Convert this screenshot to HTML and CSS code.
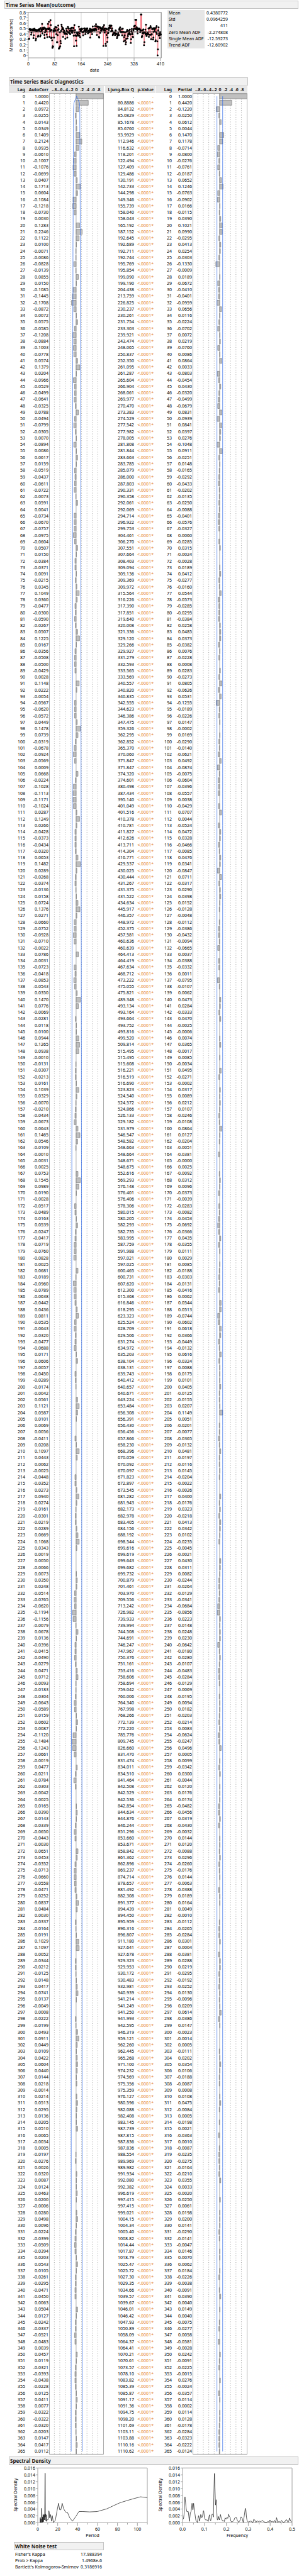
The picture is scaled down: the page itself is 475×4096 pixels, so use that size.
FILE: index.html
```html
<!DOCTYPE html>
<html lang="en">
<head>
<meta charset="utf-8">
<title>Time Series Mean(outcome)</title>
<link rel="stylesheet" href="styles.css">
</head>
<body>
<main class="report">
  <section>
    <h1 class="bar">Time Series Mean(outcome)</h1>
    <div class="summary">
      <svg class="series" id="series" viewBox="0 0 259 109" role="img" aria-label="Mean(outcome) by date"></svg>
      <table class="stats">
        <tr><th scope="row">Mean</th><td>0.4380772</td></tr>
        <tr><th scope="row">Std</th><td>0.0964259</td></tr>
        <tr><th scope="row">N</th><td>411</td></tr>
        <tr><th scope="row">Zero Mean ADF</th><td>-2.274808</td></tr>
        <tr><th scope="row">Single Mean ADF</th><td>-12.59273</td></tr>
        <tr><th scope="row">Trend ADF</th><td>-12.60902</td></tr>
      </table>
    </div>
  </section>

  <section class="nested diagnostics">
    <h2 class="bar">Time Series Basic Diagnostics</h2>
    <div class="lags">
      <table class="values">
        <colgroup><col class="lag-col"><col></colgroup>
        <thead><tr><th scope="col">Lag</th><th scope="col">AutoCorr</th></tr></thead>
        <tbody id="auto"></tbody>
      </table>
      <div class="plot">
        <div class="scale"><span>-.8</span><span>-.6</span><span>-.4</span><span>-.2</span><span>0</span><span>.2</span><span>.4</span><span>.6</span><span>.8</span></div>
        <div class="frame"><svg id="autoPlot" viewBox="0 0 144 6222" preserveAspectRatio="none"></svg></div>
      </div>
      <table class="values ljung">
        <colgroup><col class="q-col"><col></colgroup>
        <thead><tr><th scope="col">Ljung-Box Q</th><th scope="col">p-Value</th></tr></thead>
        <tbody id="ljung"></tbody>
      </table>
      <table class="values">
        <colgroup><col class="lag-col"><col></colgroup>
        <thead><tr><th scope="col">Lag</th><th scope="col">Partial</th></tr></thead>
        <tbody id="partial"></tbody>
      </table>
      <div class="plot">
        <div class="scale"><span>-.8</span><span>-.6</span><span>-.4</span><span>-.2</span><span>0</span><span>.2</span><span>.4</span><span>.6</span><span>.8</span></div>
        <div class="frame"><svg id="partialPlot" viewBox="0 0 144 6222" preserveAspectRatio="none"></svg></div>
      </div>
    </div>
  </section>

  <section class="nested spectral">
    <h2 class="bar">Spectral Density</h2>
    <div class="spectra">
      <svg id="period" viewBox="0 0 230 123" role="img" aria-label="Spectral density by period"></svg>
      <svg id="frequency" viewBox="0 0 230 123" role="img" aria-label="Spectral density by frequency"></svg>
    </div>
    <section class="noise">
      <h3 class="bar">White Noise test</h3>
      <table>
        <tr><th scope="row">Fisher's Kappa</th><td>17.988394</td></tr>
        <tr><th scope="row">Prob &gt; Kappa</th><td>1.4968e-6</td></tr>
        <tr><th scope="row">Bartlett's Kolmogorov-Smirnov</th><td>0.3186916</td></tr>
      </table>
    </section>
  </section>
</main>
<script src="report.js"></script>
</body>
</html>
```
FILE: styles.css
```css
body {
  margin: 0;
  background: #fff;
  color: #000;
  font-family: "Noto Sans", "Open Sans", sans-serif;
  font-size: 7px;
  line-height: 10px;
}

.report { padding: 1px 1px 8px 7px; }

.bar {
  box-sizing: border-box;
  height: 13px;
  margin: 0;
  padding-left: 1px;
  border: 1px solid #c4c4c4;
  background: #f1f1f1;
  color: #222;
  font-size: 8px;
  font-weight: 700;
  line-height: 11px;
  white-space: nowrap;
}

svg { display: block; width: 100%; overflow: visible; }
svg text { font-size: 7px; fill: #000; }

table { border-collapse: collapse; border-spacing: 0; }
th, td { padding: 0; font-weight: 400; white-space: nowrap; }

/* Series chart and its statistics */
.summary { display: flex; align-items: flex-start; }
.series { flex: 0 0 259px; width: 259px; }
.stats { width: 96px; margin-top: 2px; }
.stats th { width: 55px; padding: 0 2px; background: #e6e6e6; text-align: left; }
.stats td { text-align: right; }
.stats tr:nth-child(4n) th { height: 11px; }

.axis { fill: none; stroke: #a0a0a0; stroke-width: 1; }
.grid { fill: none; stroke: #d2d2d2; stroke-width: 1; }
.mean { fill: none; stroke: #222; stroke-width: 1; }
.line { fill: none; stroke: #ee3a4c; stroke-width: .6; }
.dots { fill: #000; }
.density { fill: none; stroke: #111; stroke-width: .7; stroke-linejoin: round; }

/* Correlation tables and bars */
.nested { padding-left: 7px; }
.diagnostics { width: 380px; }
.diagnostics .bar { margin-bottom: 1px; }
.lags { display: grid; grid-template-columns: 64fr 87fr 82fr 59fr 87fr; padding-right: 1px; }

.values { width: 100%; table-layout: fixed; text-align: right; }
.lag-col { width: 26px; }
.q-col { width: 46px; }
.values thead th {
  height: 11px;
  background: #e6e6e6;
  font-weight: 600;
  line-height: 11px;
}
.values td { height: 10px; vertical-align: bottom; }
.values tbody tr:nth-child(4n+1) td,
.values tbody tr:nth-child(120n+60) td { height: 11px; }
.values tr > :last-child { padding-right: 1px; }
.ljung { width: auto; margin: 0 0 0 2px; border-right: 1px solid #fff; }
.ljung tr > :last-child { padding-right: 2px; }
.ljung td:last-child { color: #e38430; }

.plot { display: flex; flex-direction: column; }
.scale {
  display: flex;
  height: 11px;
  padding: 0 4px;
  background: #e6e6e6;
  font-weight: 600;
  line-height: 11px;
}
.scale span { display: flex; flex: 1 1 0; min-width: 0; justify-content: center; white-space: nowrap; }
.frame { position: relative; flex: 1; }
.frame svg { position: absolute; inset: 0; height: 100%; }
.bars { fill: #c0c0c0; stroke: #808080; stroke-width: 1.2; }
.ticks { fill: none; stroke: #777; stroke-width: 1; stroke-dasharray: 2 4; }
.zero, .box { fill: none; stroke: #909090; stroke-width: 1.3; }
.limit { fill: none; stroke: #2d68e8; stroke-width: 1.2; }

/* Spectral density */
.spectral { padding-top: 3px; }
.spectra { display: grid; grid-template-columns: 1fr 1fr; }
.noise { width: 143px; padding-left: 8px; }
.noise table { width: 100%; margin-top: 2px; }
.noise th { padding-left: 2px; text-align: left; }
.noise td { padding-right: 3px; text-align: right; }
```
FILE: report.js
```js
// One line per lag: autocorrelation, Ljung-Box Q, partial autocorrelation.
const lags = `1.0000 . 1.0000
0.4420 80.8886 0.4420
0.0972 84.8132 -0.1220
-0.0255 85.0829 -0.0250
0.0143 85.1678 0.0612
0.0349 85.6760 0.0044
0.1409 93.9929 0.1470
0.2124 112.946 0.1178
0.0935 116.632 -0.0714
-0.0610 118.201 -0.0800
-0.1007 122.494 -0.0276
-0.1076 127.409 -0.0761
-0.0699 129.486 -0.0187
0.0407 130.191 0.0652
0.1713 142.733 0.1246
0.0604 144.298 -0.0763
-0.1084 149.346 -0.0902
-0.1218 155.739 0.0166
-0.0730 158.040 -0.0115
0.0030 158.043 0.0390
0.1283 165.192 0.1021
0.2246 187.152 0.0990
0.1122 192.645 -0.0295
0.0100 192.689 0.0413
-0.0071 192.711 0.0254
-0.0086 192.744 -0.0303
-0.0828 195.769 -0.1330
-0.0139 195.854 -0.0009
0.0855 199.090 0.0189
0.0150 199.190 -0.0672
-0.1085 204.438 -0.0410
-0.1445 213.759 -0.0401
-0.1708 226.825 -0.0959
-0.0872 230.237 0.0656
0.0072 230.261 0.0116
0.0575 231.754 -0.0224
-0.0585 233.303 -0.0702
-0.1208 239.921 0.0072
-0.0884 243.474 0.0219
-0.1003 248.065 -0.0760
-0.0778 250.837 0.0086
0.0574 252.350 0.0864
0.1379 261.095 0.0033
0.0204 261.287 -0.0803
-0.0966 265.604 -0.0454
-0.0529 266.904 0.0430
-0.0499 268.061 -0.0320
-0.0641 269.977 -0.0499
-0.0325 270.470 -0.0679
0.0788 273.383 0.0831
-0.0494 274.529 -0.0939
-0.0799 277.542 0.0841
-0.0305 277.982 0.0397
0.0070 278.005 0.0276
-0.0894 281.808 -0.1048
0.0086 281.844 0.0911
0.0617 283.663 -0.0251
0.0159 283.785 0.0148
-0.0519 285.079 -0.0165
-0.0437 286.000 -0.0292
-0.0611 287.803 -0.0433
-0.0722 290.331 -0.0202
-0.0073 290.358 -0.0135
0.0591 292.061 -0.0250
0.0041 292.069 -0.0088
-0.0734 294.714 -0.0401
-0.0670 296.922 -0.0576
-0.0757 299.753 -0.0327
-0.0975 304.461 0.0060
-0.0604 306.270 -0.0285
0.0507 307.551 0.0315
0.0150 307.664 -0.0024
-0.0384 308.403 -0.0028
-0.0371 309.094 0.0189
0.0091 309.136 0.0412
-0.0215 309.369 -0.0277
0.0345 309.972 -0.0160
0.1049 315.564 0.0544
0.0360 316.226 -0.0573
-0.0477 317.390 -0.0285
-0.0300 317.851 -0.0295
-0.0590 319.640 -0.0384
-0.0267 320.008 0.0258
0.0507 321.336 0.0485
0.1225 329.120 0.0373
0.0167 329.266 -0.0382
-0.0356 329.927 0.0076
-0.0508 331.279 -0.0228
-0.0500 332.593 0.0008
-0.0429 333.565 0.0283
0.0028 333.569 -0.0273
0.1148 340.557 0.0805
0.0222 340.820 -0.0626
-0.0054 340.835 0.0531
-0.0567 342.555 -0.1255
-0.0620 344.623 -0.0189
-0.0572 346.386 -0.0226
0.0449 347.475 0.0147
0.1478 359.326 -0.0002
0.0739 362.295 0.0169
-0.0319 362.852 -0.0290
-0.0678 365.370 -0.0140
-0.0924 370.060 -0.0621
-0.0569 371.847 0.0492
0.0009 371.847 -0.0874
0.0668 374.320 -0.0075
-0.0224 374.601 -0.0604
-0.1028 380.498 -0.0396
-0.1113 387.434 -0.0557
-0.1171 395.140 0.0038
-0.1024 401.049 -0.0429
0.0287 401.516 0.0707
0.1249 410.378 0.0044
0.0266 410.781 -0.0524
-0.0428 411.827 0.0472
-0.0373 412.626 0.0328
-0.0434 413.711 -0.0466
-0.0320 414.304 -0.0085
0.0653 416.771 0.0476
0.1482 429.537 0.0341
0.0289 430.025 -0.0847
-0.0268 430.444 0.0711
-0.0374 431.267 -0.0317
-0.0136 431.375 0.0290
0.0158 431.522 0.0398
0.0724 434.634 0.0152
0.1376 445.917 -0.0128
0.0271 446.357 -0.0048
-0.0660 448.972 -0.0112
-0.0752 452.375 -0.0386
-0.0928 457.581 -0.0432
-0.0710 460.636 -0.0094
-0.0022 460.639 -0.0665
0.0786 464.413 0.0037
-0.0031 464.419 -0.0388
-0.0723 467.634 -0.0332
-0.0418 468.712 0.0011
-0.0853 473.222 -0.0795
-0.0543 475.055 -0.0107
0.0350 475.821 0.0062
0.1470 489.348 0.0473
0.0776 493.134 0.0284
-0.0069 493.164 -0.0333
-0.0281 493.664 0.0470
0.0118 493.752 -0.0025
0.0100 493.816 -0.0006
0.0944 499.520 0.0074
0.1265 509.814 0.0365
0.0938 515.495 -0.0017
-0.0010 515.495 0.0085
-0.0131 515.608 -0.0034
-0.0307 516.221 0.0495
-0.0213 516.519 -0.0271
0.0161 516.690 -0.0002
0.1039 523.823 0.0317
0.0329 524.540 0.0089
-0.0070 524.572 0.0212
-0.0210 524.866 0.0107
-0.0434 526.133 -0.0246
-0.0673 529.182 -0.0108
0.0643 531.979 0.0864
0.1465 546.547 0.0127
0.0546 548.582 -0.0204
-0.0109 548.663 -0.0051
-0.0010 548.664 -0.0381
-0.0031 548.671 -0.0000
0.0025 548.675 0.0025
0.0753 552.616 -0.0092
0.1545 569.293 0.0312
0.0989 576.148 0.0096
0.0190 576.401 -0.0373
-0.0028 576.406 -0.0039
-0.0517 578.306 -0.0283
-0.0489 580.015 -0.0082
0.0163 580.205 -0.0453
0.0539 582.293 -0.0692
-0.0247 582.735 -0.0366
-0.0417 583.995 0.0435
-0.0719 587.759 -0.0355
-0.0760 591.988 0.0111
-0.0828 597.021 0.0029
0.0025 597.025 0.0085
0.0681 600.465 -0.0188
-0.0189 600.731 -0.0303
-0.0960 607.620 -0.0131
-0.0789 612.300 -0.0416
-0.0638 615.368 0.0062
-0.0442 616.846 0.0544
0.0436 618.295 0.0513
0.0811 623.323 -0.0744
-0.0535 625.524 -0.0602
-0.0643 628.709 0.0618
-0.0320 629.506 0.0366
-0.0477 631.274 -0.0449
-0.0688 634.972 -0.0132
0.0171 635.203 0.0616
0.0606 638.104 -0.0324
-0.0057 638.131 0.0088
-0.0450 639.743 0.0175
-0.0289 640.412 0.0101
-0.0174 640.657 0.0405
-0.0042 640.671 -0.0125
0.0561 643.224 -0.0155
0.1121 653.484 0.0207
0.0587 656.308 0.1149
0.0101 656.391 0.0051
0.0069 656.430 -0.0201
0.0056 656.456 -0.0077
-0.0411 657.866 -0.0365
0.0208 658.230 -0.0132
0.1097 668.396 0.0481
0.0443 670.059 -0.0197
0.0062 670.092 -0.0116
-0.0025 670.097 0.0145
-0.0448 671.823 -0.0204
-0.0352 672.897 -0.0022
0.0273 673.545 -0.0026
0.0940 681.282 0.0400
0.0274 681.943 -0.0176
-0.0161 682.173 0.0323
-0.0301 682.978 -0.0218
-0.0219 683.405 0.0413
0.0289 684.156 0.0342
0.0669 688.192 0.0102
0.1068 698.544 -0.0235
0.0343 699.616 -0.0045
0.0019 699.619 -0.0021
0.0050 699.643 0.0430
-0.0066 699.682 0.0311
0.0073 699.732 0.0082
0.0350 700.879 -0.0244
0.0248 701.461 -0.0264
-0.0514 703.970 -0.0129
-0.0765 709.556 -0.0341
-0.0620 713.242 -0.0684
-0.1194 726.982 -0.0856
-0.1156 739.933 0.0223
-0.0079 739.994 0.0148
0.0678 744.508 0.0248
0.0136 744.691 0.0230
-0.0396 746.247 -0.0642
-0.0415 747.967 -0.0180
-0.0490 750.376 0.0280
-0.0279 751.161 -0.0107
0.0471 753.416 -0.0483
0.0712 758.606 -0.0284
-0.0093 758.694 -0.0129
-0.0183 759.042 0.0069
-0.0304 760.006 -0.0195
-0.0643 764.340 0.0094
-0.0589 767.998 0.0182
0.0159 768.266 -0.0203
0.0602 772.139 -0.0214
0.0087 772.220 0.0083
-0.1120 785.776 -0.0624
-0.1484 809.745 -0.0247
-0.1243 826.660 0.0496
-0.0661 831.470 0.0005
-0.0019 831.474 0.0099
0.0477 834.011 -0.0342
-0.0211 834.510 0.0300
-0.0784 841.464 -0.0044
-0.0303 842.508 0.0120
-0.0042 842.529 0.0176
0.0025 842.536 0.0174
0.0165 842.854 -0.0482
0.0390 844.634 -0.0456
0.0143 844.876 0.0319
-0.0339 846.244 -0.0430
-0.0650 851.296 -0.0032
-0.0443 853.660 0.0144
-0.0030 853.671 0.0120
0.0651 858.842 -0.0088
0.0453 861.362 0.0296
-0.0352 862.896 -0.0260
-0.0713 869.237 -0.0176
-0.0660 874.714 0.0144
-0.0558 878.657 -0.0063
-0.0471 881.492 -0.0388
0.0252 882.308 0.0189
0.0837 891.377 0.0164
0.0484 894.439 0.0049
0.0030 894.450 -0.0010
-0.0337 895.959 -0.0112
-0.0164 896.316 -0.0265
0.0191 896.807 -0.0284
0.1029 911.180 0.0301
0.1097 927.641 0.0004
0.0052 927.678 -0.0381
-0.0344 929.323 0.0288
-0.0212 929.953 0.0219
-0.0125 930.172 -0.0295
0.0148 930.483 -0.0192
0.0417 932.981 -0.0252
0.0741 940.939 0.0130
0.0137 941.214 -0.0096
-0.0049 941.249 0.0209
0.0008 941.250 0.0614
-0.0222 941.993 -0.0386
-0.0199 942.595 0.0147
0.0493 946.319 -0.0023
0.0911 959.121 -0.0014
0.0449 962.260 0.0005
0.0109 962.445 -0.0111
0.0422 965.268 0.0202
0.0604 971.100 0.0354
0.0440 974.232 0.0106
0.0144 974.569 -0.0188
0.0218 975.356 -0.0087
-0.0014 975.359 0.0008
0.0214 976.127 0.0108
0.0513 980.596 0.0475
0.0295 982.088 -0.0084
0.0136 982.408 0.0005
0.0205 983.145 -0.0198
0.0510 987.739 0.0021
0.0065 987.815 -0.0363
-0.0034 987.836 0.0010
0.0005 987.836 -0.0087
-0.0197 988.554 -0.0235
-0.0276 989.969 -0.0275
0.0026 989.982 -0.0164
0.0320 991.934 -0.0210
0.0087 992.080 0.0355
0.0124 992.382 0.0033
0.0463 996.619 -0.0020
0.0200 997.415 0.0250
-0.0006 997.415 0.0061
0.0280 999.021 0.0198
0.0498 1004.15 0.0200
0.0096 1004.34 0.0141
-0.0224 1005.40 -0.0290
-0.0399 1008.82 -0.0141
-0.0509 1014.44 -0.0047
-0.0394 1017.87 0.0146
0.0203 1018.79 0.0070
0.0543 1025.47 0.0062
0.0105 1025.72 0.0184
-0.0261 1027.30 -0.0226
-0.0295 1029.35 -0.0038
-0.0471 1034.66 -0.0091
-0.0450 1039.57 0.0390
0.0063 1039.67 0.0040
0.0504 1046.01 0.0149
0.0127 1046.42 0.0040
-0.0242 1047.93 -0.0075
-0.0337 1050.89 -0.0277
-0.0521 1058.09 0.0058
-0.0483 1064.37 -0.0581
0.0039 1064.41 -0.0028
0.0457 1070.21 0.0242
0.0119 1070.61 -0.0091
-0.0321 1073.57 -0.0225
-0.0393 1078.10 -0.0015
-0.0438 1083.82 0.0276
-0.0228 1085.39 -0.0024
0.0125 1085.87 -0.0357
0.0411 1091.17 0.0114
0.0077 1091.36 0.0002
-0.0322 1094.75 0.0114
-0.0322 1098.20 0.0128
-0.0320 1101.69 -0.0178
-0.0203 1103.11 -0.0284
0.0147 1103.88 -0.0323
0.0417 1110.16 -0.0222
0.0112 1110.62 -0.0124`.split("\n").map(line => line.split(" "));

const byId = id => document.getElementById(id);

function fillRows(id, rows) {
  byId(id).innerHTML = rows
    .map(cells => "<tr>" + cells.map(c => "<td>" + c + "</td>").join("") + "</tr>")
    .join("");
}
fillRows("auto", lags.map((r, i) => [i, r[0]]));
fillRows("ljung", lags.map((r, i) => [r[1], i ? "&lt;.0001*" : "."]));
fillRows("partial", lags.map((r, i) => [i, r[2]]));

// Horizontal bar per lag, dotted ticks and the two confidence limits.
function drawCorrelation(id, values, limits, centre) {
  const zero = 71, unit = 71.5, pitch = 17, height = 6222;
  let ticks = "", bars = "";
  for (let k = -4; k <= 4; k++) {
    if (k) ticks += `M${zero + k * 14.3} 3V${height}`;
  }
  values.forEach((v, i) => {
    const w = Math.round(Math.abs(v) * unit);
    if (w) bars += `M${zero} ${i * pitch + 2}h${v < 0 ? -w : w}v13H${zero}z`;
  });
  const side = sign => "M" + limits.map((l, i) => `${centre + sign * l} ${i * pitch + 8.5}`).join("L");
  byId(id).innerHTML =
    `<path class="ticks" d="${ticks}"/><path class="bars" d="${bars}"/>` +
    `<path class="zero" d="M${zero} 0V${height}"/>` +
    `<path class="box" d="M.8 .8H143.2V${height - 1}H.8z"/>` +
    `<path class="limit" d="${side(-1)}"/><path class="limit" d="${side(1)}"/>`;
}

const auto = lags.map(r => +r[0]);
const partial = lags.map(r => +r[2]);
let sum = 0;
const autoLimits = auto.map((r, i) => {
  if (i === 0) return 0;
  const half = 143 * Math.sqrt((1 + 2 * sum) / 411);
  sum += r * r;
  return half;
});
drawCorrelation("autoPlot", auto, autoLimits, 72.5);
drawCorrelation("partialPlot", partial, partial.map(() => 7.5), 71.5);

const label = (x, y, text, anchor = "middle") =>
  `<text x="${x}" y="${y}" text-anchor="${anchor}">${text}</text>`;
const turned = (x, y, text) =>
  `<text transform="translate(${x} ${y}) rotate(-90)" text-anchor="middle">${text}</text>`;

// Series chart. Extremes are listed; other days lie inside a local band.
const extremes = [199,218,201,216,216,183,218,168,234,210,237,189,252,228,255,216,270,200,271,192,288,198,289,188,303,99,306,174,321,186,324,210,326,165,339,183,342,204,348,99,357,81,360,201,369,69,372,108,375,210,378,207,381,228,384,288,387,276,390,279,393,159,396,207,408,123,415,180,420,243,423,243,423,187,429,111,435,294,438,288,441,285,441,165,444,276,447,234,450,252,456,105,468,201,480,177,486,216,489,177,498,180,501,207,507,121,522,174,525,180,540,170,552,192,555,276,558,108,570,231,573,195,576,273,579,175,590,192,594,120,603,204,627,189,645,180,663,174,681,207,697,180,728,102,735,186,750,201,753,207,762,170,786,273,792,108,804,255,807,273,813,186,816,240,820,207,822,172,846,111,849,114,878,187,882,150,894,210,897,201,900,187,918,126,933,189,948,237,948,204,954,189,957,228,963,261,966,243,966,216,978,213,981,195,999,183,1002,249,1005,219,1017,201,1020,204,1038,66,1047,66,1056,174,1083,24,1086,24,1089,204,1092,195,1107,267,1110,243,1122,105,1128,195,1137,183,1146,201,1158,117,1164,219,1170,138,1178,222,1182,207,1197,237,1200,228,1206,117,1212,237,1215,348,1218,300,1221,126,1233,210,1239,183];
const bands = [[250,136,152],[290,134,158],[330,120,160],[370,125,158],[395,133,160],[420,122,155],[460,118,165],[510,130,178],[560,128,172],[600,145,196],[660,128,165],[700,135,172],[740,116,150],[790,120,152],[830,130,170],[860,112,160],[910,155,188],[950,132,168],[1020,138,185],[1070,112,150],[1120,140,178],[1180,122,188],[1250,122,192]];
const series = new Array(411);
for (let i = 0; i < extremes.length; i += 2) {
  let day = Math.round((extremes[i] - 193) / 2.547);
  while (series[day] !== undefined && day < 410) day++;
  series[day] = extremes[i + 1];
}
let seed = 7;
for (let day = 2; day < 411; day++) {
  seed = (seed * 16807) % 2147483647;
  if (series[day] !== undefined) continue;
  const band = bands.find(b => b[0] > 193 + day * 2.547);
  series[day] = band[1] + (band[2] - band[1]) * (seed / 2147483647);
}
const points = [];
series.forEach((y, day) => {
  points.push([((193 + day * 2.547) * .2012 - .96).toFixed(1), (y * .2012 + 4.1).toFixed(1)]);
});
let chart = "";
[82, 164, 246, 328, 410].forEach(v => {
  chart += `<path class="grid" d="M${37.9 + v * .5125} 6V78"/>`;
});
let ticks = "M37.9 5.5H249.4V78H37.9z";
for (let i = 0; i <= 5; i++) {
  const x = 37.9 + i * 42.03;
  ticks += `M${x} 78v5`;
  chart += label(x, 90, i * 82);
}
for (let i = 0; i <= 8; i++) {
  const y = 74.1 - i * 8.56;
  ticks += `M37.9 ${y}h-3.5` + (i < 8 ? `M37.9 ${y - 4.3}h-2` : "");
  chart += label(34, y + 3, i ? "0." + i : "0", "end");
}
chart += `<path class="axis" d="${ticks}"/><path class="line" d="M${points.join("L")}"/>` +
  `<g class="dots">${points.map(p => `<circle cx="${p[0]}" cy="${p[1]}" r="1.5"/>`).join("")}</g>` +
  `<path class="mean" d="M37.9 36.8H249.4"/>` +
  label(143, 100, "date") + turned(13, 42, "Mean(outcome)");
byId("series").innerHTML = chart;

// Spectral charts share one frame: x 46-220, y 5-92.
const frequencyLine = [957,772,960,768,963,735,966,620,968,595,971,640,974,690,978,713,985,711,988,750,991,789,993,765,996,720,999,713,1002,690,1005,646,1008,697,1010,697,1013,646,1016,690,1020,730,1025,780,1028,785,1033,797,1036,765,1039,743,1044,787,1047,765,1050,735,1053,740,1056,761,1060,745,1064,706,1066,705,1070,760,1075,777,1085,778,1090,789,1094,750,1097,737,1100,778,1103,783,1107,745,1110,730,1113,733,1117,755,1119,600,1122,410,1125,520,1128,660,1131,618,1134,690,1137,775,1139,778,1143,750,1148,778,1151,755,1154,735,1158,765,1165,785,1170,783,1174,790,1178,762,1184,770,1188,757,1192,765,1197,732,1200,750,1204,755,1208,785,1212,794,1218,790,1224,782,1229,762,1237,758,1242,780,1249,796,1255,785,1262,753,1268,765,1273,797,1279,740,1284,686,1287,697,1290,755,1294,786,1301,794,1309,788,1315,786,1320,797,1324,797,1329,771,1334,780,1340,797,1346,784,1352,791,1358,787,1366,791,1374,780,1380,791,1388,796,1397,797,1403,789,1409,796,1413,778,1419,794,1425,788,1432,794,1438,781,1443,797,1448,759,1454,797,1461,789,1468,796,1474,781,1482,797,1491,793,1499,774,1502,778,1508,797,1512,785,1516,763,1521,783,1527,795];
const periodLine = [772,601,736,595,683,617,630,641,595,665,560,690,510,711,470,714,435,711,414,711,398,750,380,787,366,762,354,719,344,715,334,690,326,646,319,697,313,697,307,646,298,713,290,780,280,797,274,743,270,787,265,735,260,761,258,715,256,705,252,775,247,777,244,789,243,737,241,783,239,730,238,755,237,408,236,408,235,640,234,778,232,735,231,778,230,740,229,785,228,792,226,732,225,755,224,795,223,755,222,795,220,760,219,686,218,686,217,797,216,770,215,797,214,770,213,797,212,759,211,759,210,797];
function drawSpectrum(id, line, left, xLabels, step, title) {
  let path = "M46 5.2H220V92.2H46z", text = "";
  for (let i = 0; i <= 8; i++) {
    const y = 92.2 - i * 10.87;
    path += `M46 ${y}h-3`;
    text += label(42, y + 3, (i * .002).toFixed(3), "end");
  }
  for (let i = 0, x = 46; x <= 220.5; x += step / 2, i++) path += `M${x} 92.2v${i % 2 ? 3 : 5}`;
  xLabels.forEach((t, i) => { text += label(46 + i * step, 105, t); });
  let curve = "";
  for (let i = 0; i < line.length; i += 2) {
    const x = (line[i] - left) * .303 + 46;
    const y = 92.2 - (799 - line[i + 1]) * .2014;
    curve += (i ? "L" : "M") + x.toFixed(1) + " " + y.toFixed(1);
  }
  byId(id).innerHTML = `<path class="axis" d="${path}"/><path class="density" d="${curve}"/>` +
    text + label(133, 115, title) + turned(13, 48, "Spectral Density");
}
drawSpectrum("period", periodLine, 198, ["0", "20", "40", "60", "80", "100"], 31.66, "Period");
drawSpectrum("frequency", frequencyLine, 955, ["0.0", "0.1", "0.2", "0.3", "0.4", "0.5"], 34.8, "Frequency");
```
